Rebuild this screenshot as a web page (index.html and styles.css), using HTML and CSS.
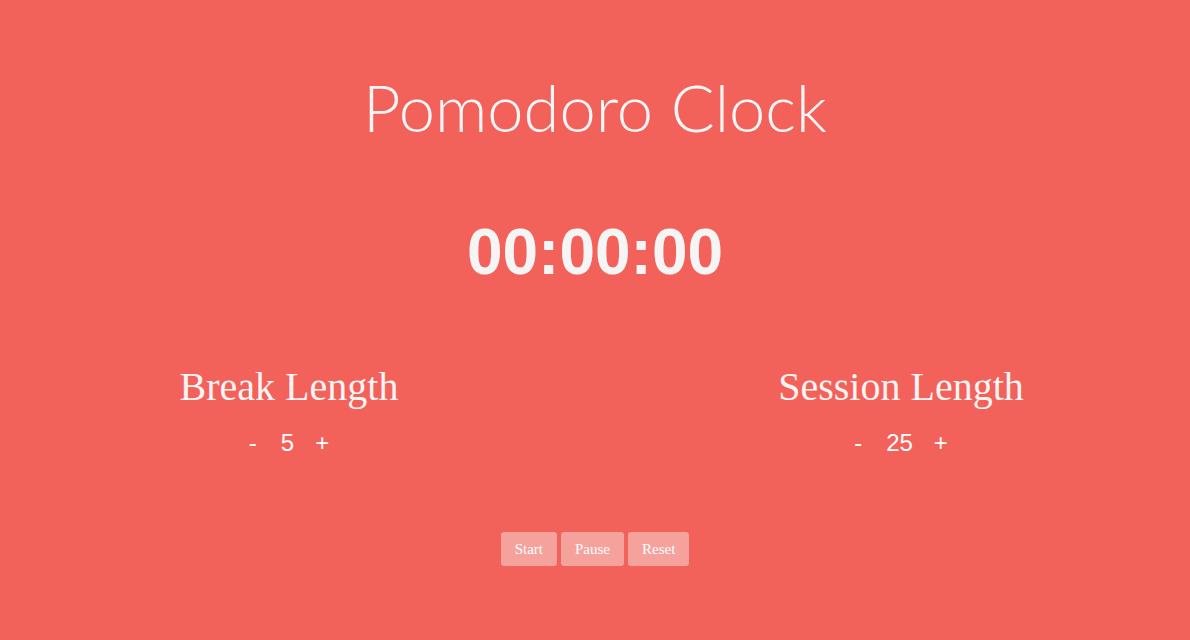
FILE: index.html
```html
<!DOCTYPE html>
<html lang="en">
<head>
<meta charset="utf-8">
<title>Pomodoro Clock</title>
<link rel="stylesheet" href="styles.css">
</head>
<body>
<main class="app">
  <h1 class="title">Pomodoro Clock</h1>
  <div class="timer">00:00:00</div>
  <section class="settings">
    <div class="setting">
      <h2 class="setting-label">Break Length</h2>
      <div class="controls">
        <span class="ctl minus">-</span>
        <span class="value">5</span>
        <span class="ctl plus">+</span>
      </div>
    </div>
    <div class="setting">
      <h2 class="setting-label">Session Length</h2>
      <div class="controls">
        <span class="ctl minus">-</span>
        <span class="value">25</span>
        <span class="ctl plus">+</span>
      </div>
    </div>
  </section>
  <div class="actions">
    <button class="btn">Start</button>
    <button class="btn">Pause</button>
    <button class="btn">Reset</button>
  </div>
</main>
</body>
</html>
```

FILE: styles.css
```css
html, body {
  margin: 0;
  padding: 0;
  height: 100%;
}
body {
  background: #f3625a;
  color: #f5f5f5;
  font-family: "Liberation Sans", Arial, sans-serif;
}
.app {
  display: flex;
  flex-direction: column;
  align-items: center;
  padding-top: 62px;
}
.title {
  margin: 0;
  font-family: Lato, "Noto Sans", sans-serif;
  font-weight: 300;
  font-size: 65px;
  line-height: 90px;
  color: #f7f5f5;
}
.timer {
  margin-top: 60px;
  font-family: "Liberation Sans", Arial, sans-serif;
  font-weight: 700;
  font-size: 64px;
  line-height: 80px;
  color: #f5f5f5;
}
.settings {
  align-self: stretch;
  display: flex;
  justify-content: space-between;
  padding: 0 89px;
  margin-top: 70px;
}
.setting {
  width: 400px;
  display: flex;
  flex-direction: column;
  align-items: center;
}
.setting-label {
  margin: 0;
  font-family: "Liberation Serif", "Times New Roman", serif;
  font-weight: 400;
  font-size: 40px;
  line-height: 50px;
  color: #fbf4f4;
}
.controls {
  display: flex;
  align-items: baseline;
  margin-top: 16px;
  font-family: "Liberation Sans", Arial, sans-serif;
  font-size: 24px;
  line-height: 30px;
  color: #fff;
}
.minus { margin-right: 24px; }
.plus { margin-left: 21px; }
.actions {
  display: flex;
  gap: 4px;
  margin-top: 74px;
}
.btn {
  border: none;
  border-radius: 3px;
  background: #f5a19c;
  color: #fff;
  font-family: "Liberation Serif", "Times New Roman", serif;
  font-size: 15px;
  height: 34px;
  padding: 0 14px;
  cursor: pointer;
}
```
